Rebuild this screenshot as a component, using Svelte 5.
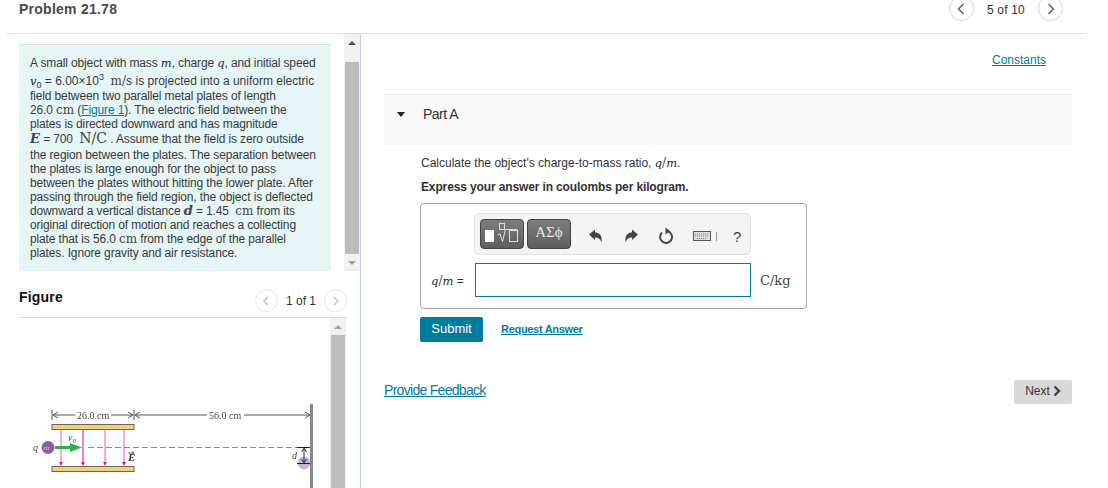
<script>
  let current = 5;
  let total = 10;
</script>

<div class="page">
  <header class="top">
    <h1>Problem 21.78</h1>
    <nav class="pager">
      <button class="circle" aria-label="Previous">
        <svg width="10" height="14" viewBox="0 0 10 14"><path d="M7.5 2 L2.5 7 L7.5 12" /></svg>
      </button>
      <span class="count">{current} of {total}</span>
      <button class="circle" aria-label="Next">
        <svg width="10" height="14" viewBox="0 0 10 14"><path d="M2.5 2 L7.5 7 L2.5 12" /></svg>
      </button>
    </nav>
  </header>

  <div class="columns">
    <aside class="left">
      <div class="problem-wrap">
        <div class="problem">
          <div class="ln">A small object with mass <i class="mi">m</i>, charge <i class="mi">q</i>, and initial speed</div>
          <div class="ln tall"><i class="mi">v</i><sub>0</sub> = 6.00×10<sup>3</sup> &nbsp;<span class="mu">m/s</span> is projected into a uniform electric</div>
          <div class="ln step">field between two parallel metal plates of length</div>
          <div class="ln">26.0 <span class="mu">cm</span> (<a href="#fig">Figure 1</a>). The electric field between the</div>
          <div class="ln">plates is directed downward and has magnitude</div>
          <div class="ln step">
            <i class="mi big">E</i> = 700 &nbsp;<span class="mu big">N/C</span> . Assume that the field is zero outside
          </div>
          <div class="ln tall2">the region between the plates. The separation between</div>
          <div class="ln">the plates is large enough for the object to pass</div>
          <div class="ln">between the plates without hitting the lower plate. After</div>
          <div class="ln">passing through the field region, the object is deflected</div>
          <div class="ln">downward a vertical distance <i class="mi big">d</i> = 1.45 &nbsp;<span class="mu">cm</span> from its</div>
          <div class="ln">original direction of motion and reaches a collecting</div>
          <div class="ln">plate that is 56.0 <span class="mu">cm</span> from the edge of the parallel</div>
          <div class="ln">plates. Ignore gravity and air resistance.</div>
        </div>
        <div class="scrollbar short">
          <span class="arrow up"></span>
          <div class="thumb"></div>
          <span class="arrow down"></span>
        </div>
      </div>

      <div class="figure-head">
        <h2>Figure</h2>
        <div class="fig-pager">
          <button class="circle small" aria-label="Previous figure">
            <svg width="8" height="12" viewBox="0 0 8 12"><path d="M6 2 L2 6 L6 10" /></svg>
          </button>
          <span>1 of 1</span>
          <button class="circle small" aria-label="Next figure">
            <svg width="8" height="12" viewBox="0 0 8 12"><path d="M2 2 L6 6 L2 10" /></svg>
          </button>
        </div>
      </div>

      <div class="figure-body">
        <svg class="diagram" width="331" height="170" viewBox="0 318 331 170">
          <g stroke="#555" stroke-width="1" fill="none">
            <path d="M52 410V420M134 410V420" />
            <path d="M53 415H75M111 415H133M135 415H207M244 415H310" />
            <path d="M58 412L53 415L58 418M128 412L133 415L128 418M140 412L135 415L140 418M305 412L310 415L305 418" />
          </g>
          <text x="77" y="419" class="fig-t">26.0 cm</text>
          <text x="209" y="419" class="fig-t">56.0 cm</text>
          <rect x="52" y="424.5" width="82" height="5" fill="#f6cf7d" stroke="#666" />
          <rect x="52" y="466.5" width="82" height="5" fill="#f6cf7d" stroke="#666" />
          <g stroke="#ee5fae" stroke-width="1">
            <path d="M61 430V464M105 430V464M124 430V464" />
            <path d="M83 430V464" stroke="#d0107f" />
          </g>
          <g fill="#e6178b">
            <path d="M59 462H63L61 466ZM81 462H85L83 466ZM103 462H107L105 466ZM122 462H126L124 466Z" />
          </g>
          <path d="M88 447.5H298" stroke="#888" stroke-dasharray="6 3" fill="none" />
          <rect x="55" y="446" width="18" height="3" fill="#2cb04c" />
          <path d="M70 443L82 447.5L70 452Z" fill="#2cb04c" />
          <circle cx="48" cy="447.5" r="6.5" fill="#8e5c9e" />
          <text x="44" y="450" class="fig-i small-i">m</text>
          <text x="33" y="451" class="fig-i">q</text>
          <text x="68" y="441" class="fig-i">v₀</text>
          <text x="128" y="461" class="fig-e">E</text>
          <path d="M128 453H134M132 451.5L134 453L132 454.5" stroke="#333" stroke-width="0.7" fill="none" />
          <circle cx="304" cy="463" r="6.5" fill="#c9b3d6" />
          <path d="M311.5 404V488" stroke="#888" stroke-width="3" />
          <path d="M297 447.5H310M297 463.5H310" stroke="#222" />
          <path d="M304 449V462M301.5 452L304 448L306.5 452M301.5 459L304 463L306.5 459" stroke="#333" fill="none" />
          <text x="292" y="459" class="fig-i">d</text>
        </svg>
        <div class="scrollbar tall-bar">
          <span class="arrow up"></span>
          <div class="thumb"></div>
        </div>
      </div>
    </aside>

    <main class="right">
      <div class="constants"><a href="#constants">Constants</a></div>

      <section class="part-bar">
        <span class="caret"></span>
        <span>Part A</span>
      </section>

      <div class="part-body">
        <p class="prompt">Calculate the object's charge-to-mass ratio, <i class="mi">q</i><span class="mu">/</span><i class="mi">m</i>.</p>
        <p class="hint">Express your answer in coulombs per kilogram.</p>

        <div class="answer-box">
          <div class="toolbar">
            <button class="tool-btn" aria-label="Templates">
              <span class="solid"></span>
              <svg width="22" height="24" viewBox="0 0 22 24">
                <g fill="none" stroke="#ddd" stroke-width="1">
                  <rect x="2.5" y="1.5" width="5" height="6" />
                  <path d="M0.5 13L3 12L5.5 19.5L8.5 7.5H20.5" />
                  <rect x="12.5" y="8.5" width="8" height="11" />
                </g>
              </svg>
            </button>
            <button class="tool-btn greek">ΑΣϕ</button>
            <div class="tools">
              <svg width="16" height="16" viewBox="0 0 16 16"><path d="M1 6.5L7 1.5V4.5C11 4.5 14.5 7 13.5 14.5C12.5 11.5 11 9.5 7 9.5V12Z" fill="#444" /></svg>
              <svg width="16" height="16" viewBox="0 0 16 16"><path d="M15 6.5L9 1.5V4.5C5 4.5 1.5 7 2.5 14.5C3.5 11.5 5 9.5 9 9.5V12Z" fill="#444" /></svg>
              <svg width="16" height="18" viewBox="0 0 16 18"><path d="M9.5 4.1A6 6 0 1 1 4 5.5" fill="none" stroke="#444" stroke-width="2" /><path d="M7.5 0.5L12 4L7.5 7.5Z" fill="#444" /></svg>
              <span class="kbd-wrap">
                <svg width="18" height="10" viewBox="0 0 18 10"><rect x="0.5" y="0.5" width="17" height="9" fill="#ddd" stroke="#555" /><path d="M2 3H16M2 5H16M4 7.5H14" stroke="#888" stroke-dasharray="1 1" /></svg>
                <span class="sep"></span>
              </span>
              <span class="help">?</span>
            </div>
          </div>
          <div class="input-row">
            <label for="ans"><i class="mi">q</i><span class="mu">/</span><i class="mi">m</i> =</label>
            <input id="ans" type="text" />
            <span class="unit">C/kg</span>
          </div>
        </div>

        <div class="actions">
          <button class="submit">Submit</button>
          <a class="request" href="#request">Request Answer</a>
        </div>
      </div>

      <div class="footer">
        <a href="#feedback">Provide Feedback</a>
        <button class="next">Next
          <svg width="8" height="12" viewBox="0 0 8 12"><path d="M1.5 1.5L6 6L1.5 10.5" /></svg>
        </button>
      </div>
    </main>
  </div>
</div>

<style>
  :global(body) {
    margin: 0;
    background: #fff;
    overflow: hidden;
  }

  .page {
    width: 1108px;
    height: 488px;
    overflow: hidden;
    font-family: "Liberation Sans", Arial, sans-serif;
    font-size: 12px;
    color: #333;
    box-sizing: border-box;
    padding-left: 7px;
    padding-right: 22px;
  }

  a {
    color: #007c9e;
  }

  button {
    font-family: inherit;
    padding: 0;
    cursor: pointer;
  }

  .top {
    height: 33px;
    border-bottom: 1px solid #e0e0e0;
    display: flex;
    justify-content: space-between;
    align-items: flex-start;
    padding-left: 12px;
  }

  h1 {
    margin: 2px 0 0;
    font-size: 14px;
    line-height: 15px;
    font-weight: bold;
    letter-spacing: 0.25px;
    color: #4a4a4a;
  }

  .pager {
    display: flex;
    align-items: center;
    gap: 13px;
    margin-top: -4px;
    margin-right: 23px;
    font-size: 12px;
  }

  .count {
    padding-top: 3px;
    letter-spacing: 0.2px;
  }

  .circle {
    width: 25px;
    height: 25px;
    border-radius: 50%;
    border: 1px solid #d4d4d4;
    background: #fff;
    display: flex;
    align-items: center;
    justify-content: center;
  }

  .circle path {
    fill: none;
    stroke: #5c6b7a;
    stroke-width: 1.6;
  }

  .circle.small {
    width: 23px;
    height: 23px;
    border-color: #e4e4e4;
  }

  .circle.small path {
    stroke: #c8c8c8;
  }

  .columns {
    display: flex;
    height: 454px;
  }

  .left {
    width: 354px;
    box-sizing: border-box;
    border-right: 1px solid #c0d3e4;
    flex: none;
  }

  .problem-wrap {
    display: flex;
    justify-content: space-between;
    padding-left: 12px;
    height: 237px;
  }

  .problem {
    width: 312px;
    box-sizing: border-box;
    height: 227px;
    margin-top: 10px;
    background: #e6f5f6;
    border-top: 1px solid #d6e4e8;
    padding: 11px 0 0 11px;
    line-height: 14px;
    color: #3a3a3a;
    white-space: nowrap;
    letter-spacing: -0.13px;
  }

  .ln {
    height: 14px;
  }

  .ln.tall {
    margin-top: 4px;
    letter-spacing: 0;
  }

  .ln.step {
    margin-top: 1px;
  }

  .ln.tall2 {
    margin-top: 2px;
  }

  .mi {
    font-family: "DejaVu Serif", serif;
    font-size: 11.5px;
    line-height: 0;
    font-style: italic;
    color: #222;
    letter-spacing: 0;
  }

  .mi.big {
    font-size: 13px;
    font-weight: bold;
    color: #444;
  }

  .mu {
    font-family: "DejaVu Serif", serif;
    font-size: 12px;
    line-height: 0;
    color: #444;
    letter-spacing: 0;
  }

  .mu.big {
    font-size: 14px;
  }

  sub, sup {
    font-size: 9px;
    line-height: 0;
  }

  .scrollbar {
    width: 16px;
    background: #f1f1f1;
    position: relative;
    flex: none;
    box-sizing: border-box;
    padding: 0 1px;
  }

  .scrollbar .thumb {
    background: #bdbdbd;
  }

  .scrollbar.short .thumb {
    height: 192px;
    margin-top: 28px;
  }

  .scrollbar.tall-bar .thumb {
    height: 160px;
    margin-top: 17px;
  }

  .arrow {
    position: absolute;
    left: 4px;
    width: 0;
    height: 0;
    border-left: 4px solid transparent;
    border-right: 4px solid transparent;
  }

  .arrow.up {
    top: 7px;
    border-bottom: 4px solid #505050;
  }

  .arrow.down {
    bottom: 6px;
    border-top: 4px solid #a0a0a0;
  }

  .tall-bar .arrow.up {
    border-bottom-color: #a0a0a0;
  }

  .figure-head {
    margin-left: 12px;
    width: 328px;
    height: 47px;
    box-sizing: border-box;
    border-bottom: 1px solid #dcdcdc;
    display: flex;
    justify-content: space-between;
    align-items: flex-start;
  }

  h2 {
    margin: 19px 0 0;
    font-size: 14px;
    line-height: 15px;
    font-weight: bold;
    letter-spacing: 0.2px;
    color: #111;
  }

  .fig-pager {
    display: flex;
    align-items: center;
    gap: 8px;
    margin-top: 18px;
    font-size: 12px;
  }

  .figure-body {
    display: flex;
    margin-left: -7px;
    width: 347px;
    height: 171px;
    overflow: hidden;
  }

  .diagram {
    flex: none;
    filter: blur(0.35px);
    margin-right: -1px;
  }

  .fig-t {
    font-family: "Liberation Serif", serif;
    font-size: 10px;
    fill: #444;
  }

  .fig-i {
    font-family: "Liberation Serif", serif;
    font-style: italic;
    font-size: 10px;
    fill: #444;
  }

  .small-i {
    font-size: 7px;
    fill: #ddd;
  }

  .fig-e {
    font-family: "Liberation Serif", serif;
    font-style: italic;
    font-weight: bold;
    font-size: 11px;
    fill: #333;
  }

  .right {
    flex: 1;
    min-width: 0;
    padding-left: 23px;
    padding-right: 14px;
  }

  .constants {
    text-align: right;
    padding-right: 26px;
    height: 60px;
    box-sizing: border-box;
    padding-top: 19px;
    line-height: 15px;
  }

  .part-bar {
    height: 51px;
    box-sizing: border-box;
    background: #f9f9f9;
    border-top: 1px solid #e6e6e6;
    display: flex;
    align-items: flex-start;
    padding: 12px 0 0 13px;
    gap: 18px;
    line-height: 15px;
    font-size: 14px;
    letter-spacing: -0.5px;
    color: #333;
  }

  .caret {
    width: 0;
    height: 0;
    margin-top: 5px;
    border-left: 4px solid transparent;
    border-right: 4px solid transparent;
    border-top: 5px solid #222;
  }

  .part-body {
    padding-left: 37px;
  }

  .prompt {
    margin: 11px 0 0;
    line-height: 15px;
  }

  .hint {
    margin: 9px 0 0;
    line-height: 15px;
    font-weight: bold;
    color: #333;
    letter-spacing: -0.13px;
  }

  .answer-box {
    margin-top: 8px;
    margin-left: -1px;
    width: 387px;
    height: 106px;
    box-sizing: border-box;
    border: 1px solid #aaa;
    border-radius: 4px;
    padding: 9px 0 0 53px;
  }

  .toolbar {
    width: 277px;
    height: 42px;
    box-sizing: border-box;
    background: #f4f4f4;
    border: 1px solid #e2e2e2;
    border-radius: 5px;
    display: flex;
    align-items: flex-start;
    padding: 5px 0 0 5px;
    gap: 3px;
  }

  .tool-btn {
    width: 44px;
    height: 30px;
    border: 1px solid #444;
    border-radius: 4px;
    background: linear-gradient(#7c7c7c, #5e5e5e);
    display: flex;
    align-items: center;
    justify-content: center;
    gap: 3px;
    color: #e8e8e8;
  }

  .solid {
    width: 9px;
    height: 12px;
    background: #fff;
    margin-top: 3px;
  }

  .greek {
    font-family: "Liberation Serif", serif;
    font-size: 15px;
    padding-bottom: 4px;
  }

  .tools {
    display: flex;
    align-items: center;
    height: 30px;
    margin-top: 2px;
    margin-left: 14px;
    gap: 19px;
  }

  .kbd-wrap {
    display: flex;
    align-items: center;
    gap: 5px;
  }

  .sep {
    width: 1px;
    height: 9px;
    background: #999;
  }

  .help {
    margin-left: -3px;
    font-size: 15px;
    color: #444;
  }

  .input-row {
    display: flex;
    align-items: center;
    margin-top: 8px;
    margin-left: -43px;
  }

  .input-row label {
    width: 44px;
    white-space: nowrap;
    padding-top: 2px;
    color: #333;
  }

  .input-row input {
    width: 276px;
    height: 34px;
    box-sizing: border-box;
    border: 1px solid #007c9e;
    margin: 0 9px 0 0;
    outline: none;
  }

  .unit {
    font-family: "DejaVu Serif", serif;
    font-size: 13px;
    color: #444;
  }

  .actions {
    display: flex;
    align-items: center;
    gap: 18px;
    margin-top: 8px;
    margin-left: -1px;
  }

  .submit {
    width: 63px;
    height: 25px;
    background: #007c9e;
    color: #fff;
    border: none;
    border-radius: 2px;
    font-size: 13px;
    padding-bottom: 3px;
  }

  .request {
    font-weight: bold;
    font-size: 11px;
    letter-spacing: -0.3px;
    padding-bottom: 1px;
  }

  .footer {
    display: flex;
    justify-content: space-between;
    align-items: flex-start;
    margin-top: 38px;
  }

  .footer a {
    font-size: 14px;
    margin-top: 2px;
    line-height: 16px;
    letter-spacing: -0.7px;
  }

  .next {
    width: 58px;
    height: 24px;
    background: #d9d9d9;
    border: none;
    border-radius: 2px;
    font-size: 12px;
    color: #333;
    display: flex;
    align-items: center;
    justify-content: center;
    gap: 3px;
    padding-bottom: 2px;
  }

  .next path {
    fill: none;
    stroke: #444;
    stroke-width: 2.4;
  }
</style>
